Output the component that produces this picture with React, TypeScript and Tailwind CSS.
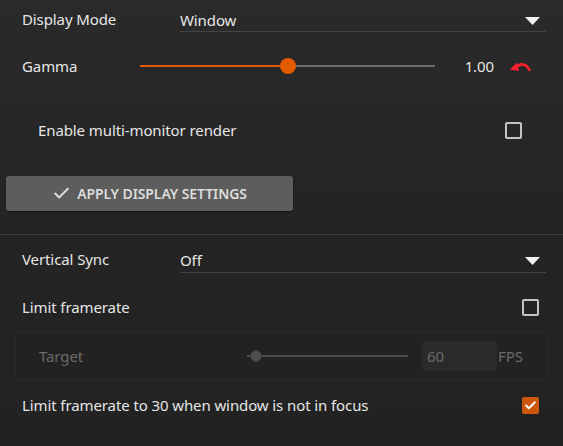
import { Check } from 'lucide-react';

function Select({ value }: { value: string }) {
  return (
    <div className="flex-1 mr-[17px] h-[26px] border-b border-[#444444] flex items-center justify-between">
      <span className="pt-[3px] text-[#e6e6e6]">{value}</span>
      <svg width="15" height="8" viewBox="0 0 15 8" className="mr-[6px] mt-[4px]">
        <polygon points="0,0 15,0 7.5,8" fill="#f2f2f2" />
      </svg>
    </div>
  );
}

function Checkbox({ checked = false }: { checked?: boolean }) {
  if (checked) {
    return (
      <div className="w-[17px] h-[17px] rounded-[2px] bg-[#cc560c] flex items-center justify-center">
        <Check className="w-[13px] h-[13px] text-white" strokeWidth={3.5} />
      </div>
    );
  }
  return <div className="w-[17px] h-[17px] rounded-[2px] border-2 border-[#c4c4c4]" />;
}

function ResetIcon() {
  return (
    <svg width="21" height="11" viewBox="0 0 21 11">
      <path d="M6 6.5 C 10 2, 16 2, 19.5 9" fill="none" stroke="#ff1f2d" strokeWidth="2.6" strokeLinecap="round" />
      <polygon points="0,8.5 7,1.5 9,10" fill="#ff1f2d" />
    </svg>
  );
}

export default function App() {
  return (
    <div
      className="w-[563px] h-[446px] overflow-hidden bg-gradient-to-b from-[#2a2a2a] via-[#242424] to-[#222222] text-[15px] tracking-[-0.1px] text-[#e6e6e6]"
      style={{ fontFamily: '"Noto Sans", "Open Sans", sans-serif' }}
    >
      {/* Display mode */}
      <div className="h-[38px] flex items-center pl-[22px]">
        <span className="w-[158px]">Display Mode</span>
        <Select value="Window" />
      </div>

      {/* Gamma */}
      <div className="h-[56px] flex items-center pl-[22px]">
        <span className="w-[118px]">Gamma</span>
        <div className="relative w-[295px] h-[16px] flex items-center">
          <div className="h-[2px] w-[148px] bg-[#e35a00]" />
          <div className="h-[2px] flex-1 bg-[#6b6b6b]" />
          <div className="absolute left-[140px] top-0 w-[16px] h-[16px] rounded-full bg-[#e35a00]" />
        </div>
        <span className="w-[59px] text-right">1.00</span>
        <span className="ml-[16px] mt-[1px] flex">
          <ResetIcon />
        </span>
      </div>

      {/* Multi monitor */}
      <div className="h-[72px] flex items-center justify-between pl-[38px] pr-[41px]">
        <span>Enable multi-monitor render</span>
        <Checkbox />
      </div>

      {/* Apply button */}
      <div className="mt-[10px] ml-[6px] w-[287px] h-[35px] rounded-[3px] bg-[#5d5d5d] flex items-center justify-center gap-[6px] shadow-[0_1px_2px_rgba(0,0,0,0.4)]">
        <Check className="w-[19px] h-[19px] text-[#dcdcdc]" strokeWidth={2.5} />
        <span className="text-[14px] font-semibold text-[#dcdcdc] tracking-[-0.1px]">APPLY DISPLAY SETTINGS</span>
      </div>

      <div className="mt-[23px] h-px bg-[#3b3b3b]" />

      {/* Vertical sync */}
      <div className="h-[49px] flex items-center pl-[22px]">
        <span className="w-[158px]">Vertical Sync</span>
        <Select value="Off" />
      </div>

      {/* Limit framerate */}
      <div className="h-[46px] flex items-center justify-between pl-[22px] pr-[24px]">
        <span>Limit framerate</span>
        <Checkbox />
      </div>

      {/* Target (disabled) */}
      <div className="mt-[2px] mx-[15px] h-[48px] border border-[#292929] bg-[#222222] flex items-center pl-[23px] text-[#6a6a6a]">
        <span className="w-[208px]">Target</span>
        <div className="relative w-[161px] h-[12px] flex items-center">
          <div className="h-[2px] w-full bg-[#4a4a4a]" />
          <div className="absolute left-[3px] top-0 w-[12px] h-[12px] rounded-full bg-[#4e4e4e] border border-[#3a3a3a]" />
        </div>
        <div className="ml-[14px] w-[75px] h-[30px] rounded-[4px] bg-[#2a2a2a] flex items-center pl-[5px]">60</div>
        <span className="ml-[1px]">FPS</span>
      </div>

      {/* Limit in background */}
      <div className="h-[50px] flex items-center justify-between pl-[22px] pr-[24px]">
        <span>Limit framerate to 30 when window is not in focus</span>
        <Checkbox checked />
      </div>
    </div>
  );
}
